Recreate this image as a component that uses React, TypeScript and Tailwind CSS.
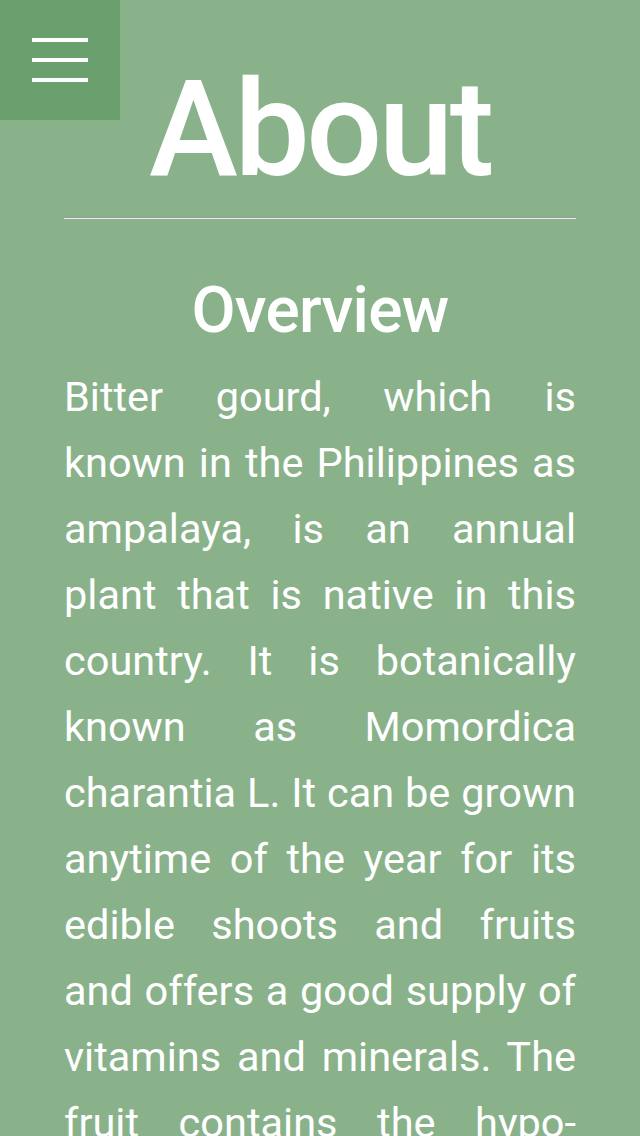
import React from "react";

const body =
  "Bitter gourd, which is known in the Philippines as ampalaya, is an annual plant that is native in this country. It is botanically known as Momordica charantia L. It can be grown anytime of the year for its edible shoots and fruits and offers a good supply of vitamins and minerals. The fruit contains the hypo-glycemic compound charantin, which is used to lower blood sugar levels. Ampalaya is also rich in iron, calcium, phosphorus and vitamin B.";

export default function App() {
  return (
    <div className="relative min-h-[1136px] w-full overflow-hidden bg-[#89b28b] font-['Roboto',sans-serif] text-white">
      {/* menu toggle */}
      <button className="absolute left-0 top-0 flex h-[120px] w-[120px] flex-col items-start gap-[16px] bg-[#6a9f6e] pl-[32px] pt-[38px]">
        <span className="block h-[4px] w-[56px] bg-white" />
        <span className="block h-[4px] w-[56px] bg-white" />
        <span className="block h-[4px] w-[56px] bg-white" />
      </button>

      <main className="px-[64px]">
        <h1 className="mt-[63px] text-center text-[134px] font-medium leading-none tracking-[-3.5px]">About</h1>
        <hr className="mt-[20px] border-t border-b border-t-[#9a9a9a] border-b-[#eeeeee]" />
        <h2 className="mt-[60px] text-center text-[64px] font-medium leading-none tracking-[-0.7px]">Overview</h2>
        <p className="mt-[21px] text-justify text-[41.5px] leading-[66px]">{body}</p>
      </main>
    </div>
  );
}
